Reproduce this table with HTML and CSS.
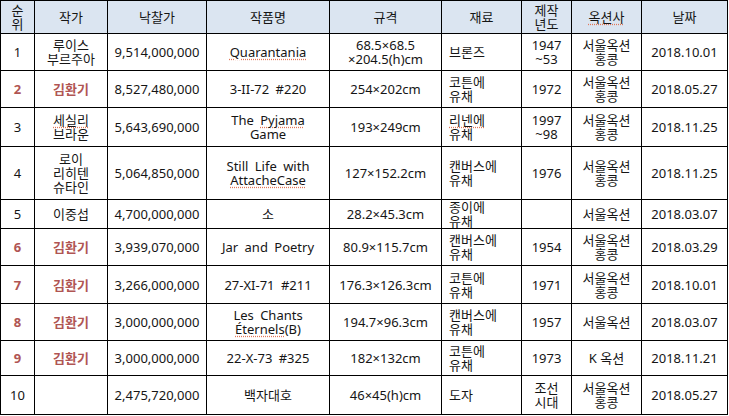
FILE: index.html
```html
<!DOCTYPE html>
<html lang="ko">
<head>
<meta charset="utf-8">
<title>경매 낙찰가 순위</title>
<link rel="stylesheet" href="styles.css">
</head>
<body>
<table class="auction">
  <colgroup>
    <col class="c-rank"><col class="c-artist"><col class="c-price"><col class="c-title"><col class="c-size"><col class="c-mat"><col class="c-year"><col class="c-house"><col class="c-date">
  </colgroup>
  <thead>
    <tr class="rh">
      <th>순<br>위</th><th>작가</th><th>낙찰가</th><th>작품명</th><th>규격</th><th>재료</th><th>제작<br>년도</th><th><span class="sp">옥션사</span></th><th>날짜</th>
    </tr>
  </thead>
  <tbody>
    <tr class="r1">
      <td>1</td><td>루이스<br>부르주아</td><td>9,514,000,000</td><td class="t"><span class="sp">Quarantania</span></td><td>68.5×68.5<br>×204.5(h)cm</td><td class="m">브론즈</td><td>1947<br>~53</td><td>서울옥션<br>홍콩</td><td>2018.10.01</td>
    </tr>
    <tr class="r2">
      <td class="k">2</td><td class="k">김환기</td><td>8,527,480,000</td><td class="t">3-II-72 #220</td><td>254×202cm</td><td class="m">코튼에<br>유채</td><td>1972</td><td>서울옥션<br>홍콩</td><td>2018.05.27</td>
    </tr>
    <tr class="r3">
      <td>3</td><td><span class="sp">세실리</span><br>브라운</td><td>5,643,690,000</td><td class="t">The <span class="sp">Pyjama</span><br>Game</td><td>193×249cm</td><td class="m"><span class="sp">리넨에</span><br>유채</td><td>1997<br>~98</td><td>서울옥션<br>홍콩</td><td>2018.11.25</td>
    </tr>
    <tr class="r4">
      <td>4</td><td>로이<br>리히텐<br>슈타인</td><td>5,064,850,000</td><td class="t">Still Life with<br><span class="sp">AttacheCase</span></td><td>127×152.2cm</td><td class="m">캔버스에<br>유채</td><td>1976</td><td>서울옥션<br>홍콩</td><td>2018.11.25</td>
    </tr>
    <tr class="r5">
      <td>5</td><td>이중섭</td><td>4,700,000,000</td><td class="t">소</td><td>28.2×45.3cm</td><td class="m">종이에<br>유채</td><td></td><td>서울옥션</td><td>2018.03.07</td>
    </tr>
    <tr class="r6">
      <td class="k">6</td><td class="k">김환기</td><td>3,939,070,000</td><td class="t">Jar and Poetry</td><td>80.9×115.7cm</td><td class="m">캔버스에<br>유채</td><td>1954</td><td>서울옥션<br>홍콩</td><td>2018.03.29</td>
    </tr>
    <tr class="r7">
      <td class="k">7</td><td class="k">김환기</td><td>3,266,000,000</td><td class="t">27-XI-71 #211</td><td>176.3×126.3cm</td><td class="m">코튼에<br>유채</td><td>1971</td><td>서울옥션<br>홍콩</td><td>2018.10.01</td>
    </tr>
    <tr class="r8">
      <td class="k">8</td><td class="k">김환기</td><td>3,000,000,000</td><td class="t">Les Chants<br><span class="sp">Éternels</span>(B)</td><td>194.7×96.3cm</td><td class="m">캔버스에<br>유채</td><td>1957</td><td>서울옥션</td><td>2018.03.07</td>
    </tr>
    <tr class="r9">
      <td class="k">9</td><td class="k">김환기</td><td>3,000,000,000</td><td class="t">22-X-73 #325</td><td>182×132cm</td><td class="m">코튼에<br>유채</td><td>1973</td><td>K 옥션</td><td>2018.11.21</td>
    </tr>
    <tr class="r10">
      <td>10</td><td></td><td>2,475,720,000</td><td class="t">백자대호</td><td>46×45(h)cm</td><td class="m">도자</td><td>조선<br>시대</td><td>서울옥션<br>홍콩</td><td>2018.05.27</td>
    </tr>
  </tbody>
</table>
</body>
</html>
```

FILE: styles.css
```css
html, body {
  margin: 0;
  padding: 0;
  background: #ffffff;
}

body {
  font-family: "Noto Sans", "Noto Sans CJK KR", sans-serif;
  font-size: 13px;
  color: #151515;
}

.auction {
  border-collapse: collapse;
  table-layout: fixed;
  width: 728px;
}

.c-rank { width: 34px; }
.c-artist { width: 73px; }
.c-price { width: 99px; }
.c-title { width: 123px; }
.c-size { width: 112px; }
.c-mat { width: 80px; }
.c-year { width: 50px; }
.c-house { width: 70px; }
.c-date { width: 86px; }

.auction th,
.auction td {
  border: 1px solid #000000;
  padding: 0 2px;
  text-align: center;
  vertical-align: middle;
  line-height: 14px;
  font-weight: normal;
  white-space: nowrap;
  overflow: hidden;
}

.auction th {
  background: #dbe5f1;
}

.auction td.m {
  text-align: left;
  padding-left: 7px;
}

.auction td.t {
  word-spacing: 3px;
}

.auction td.k {
  color: #b05553;
  font-weight: bold;
}

.sp {
  text-decoration: underline dotted #e0785a;
  text-underline-offset: 2px;
}

.rh { height: 33px; }
.r1 { height: 37px; }
.r2 { height: 37px; }
.r3 { height: 39px; }
.r4 { height: 53px; }
.r5 { height: 29px; }
.r6 { height: 37px; }
.r7 { height: 38px; }
.r8 { height: 37px; }
.r9 { height: 35px; }
.r10 { height: 39px; }
```
